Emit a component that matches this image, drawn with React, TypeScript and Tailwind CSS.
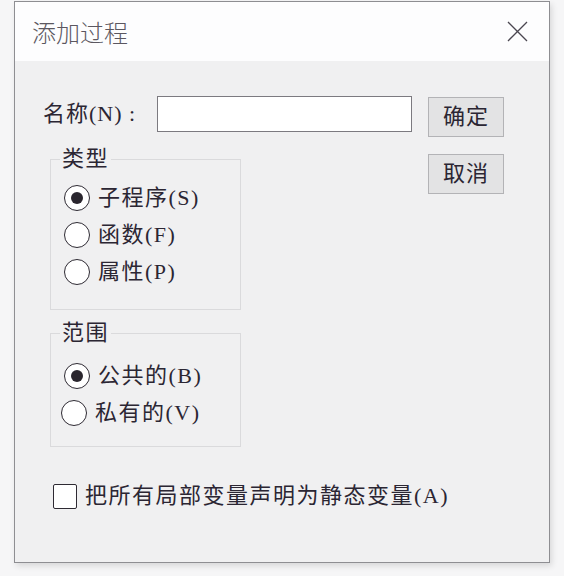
import React from "react";

const FONT = { fontFamily: '"Liberation Serif", "Noto Sans CJK SC", serif' };

function Radio({ checked, label, shift }: { checked?: boolean; label: string; shift?: boolean }) {
  return (
    <div className={"flex h-[37px] items-center gap-[8px] " + (shift ? "-ml-[3px]" : "")}>
      <div className="flex h-[26px] w-[26px] items-center justify-center rounded-full border-[1.5px] border-[#2e2a33] bg-white">
        {checked && <div className="h-[12px] w-[12px] rounded-full bg-[#2a262e]" />}
      </div>
      <span className="text-[22px] leading-[28px] tracking-[1.5px] text-[#2b2633]">{label}</span>
    </div>
  );
}

export default function App() {
  return (
    <div className="h-[576px] w-[564px] overflow-hidden bg-[#f6f6f7] pt-[1px]" style={FONT}>
      <div className="ml-[14px] flex h-[562px] w-[536px] flex-col border border-[#8e8e92] bg-[#f0f0f1] shadow-[2px_3px_6px_rgba(0,0,0,0.12)]">
        <div className="flex h-[59px] items-center justify-between bg-[#fdfdfe] pl-[17px] pr-[21px]">
          <span
            className="text-[24px] font-light leading-none text-[#5b5760]"
            style={{ fontFamily: '"Noto Sans CJK SC", sans-serif' }}
          >
            添加过程
          </span>
          <svg width="21" height="21" viewBox="0 0 21 21" className="text-[#4a4650]">
            <path d="M1 1L20 20M20 1L1 20" stroke="currentColor" strokeWidth="1.3" fill="none" />
          </svg>
        </div>
        <div className="flex flex-1 pl-[28px] pt-[35px]">
          <div className="flex w-[369px] shrink-0 flex-col">
            <div className="flex h-[36px] items-center">
              <span className="w-[114px] text-[22px] leading-[28px] tracking-[1px] text-[#2b2633]">名称(N) :</span>
              <div className="h-[36px] w-[255px] border border-[#7c7a80] bg-white" />
            </div>
            <fieldset className="ml-[7px] mt-[13px] w-[191px] border border-[#dadadc] pb-[19px] pl-[13px] pt-[6px]">
              <legend className="-ml-[4px] px-[2px] text-[22px] leading-[28px] tracking-[1.5px] text-[#2b2633]">类型</legend>
              <Radio checked label="子程序(S)" />
              <Radio label="函数(F)" />
              <Radio label="属性(P)" />
            </fieldset>
            <fieldset className="ml-[7px] mt-[9px] w-[191px] border border-[#dadadc] pb-[15px] pl-[13px] pt-[10px]">
              <legend className="-ml-[4px] px-[2px] text-[22px] leading-[28px] tracking-[1.5px] text-[#2b2633]">范围</legend>
              <Radio checked label="公共的(B)" />
              <Radio shift label="私有的(V)" />
            </fieldset>
            <div className="ml-[10px] mt-[34px] flex h-[30px] items-center gap-[8px]">
              <div className="h-[25px] w-[24px] shrink-0 rounded-[2px] border-[1.5px] border-[#2e2a33] bg-white" />
              <span className="whitespace-nowrap text-[22px] leading-[28px] tracking-[1.5px] text-[#2b2633]">把所有局部变量声明为静态变量(A)</span>
            </div>
          </div>
          <div className="ml-[16px] mt-[1px] flex flex-col gap-[17px]">
            <button className="flex h-[40px] w-[76px] items-center justify-center border border-[#b3b3b6] bg-[#e3e3e4] text-[22px] leading-none tracking-[1px] text-[#2b2633]">
              确定
            </button>
            <button className="flex h-[40px] w-[76px] items-center justify-center border border-[#b3b3b6] bg-[#e3e3e4] text-[22px] leading-none tracking-[1px] text-[#2b2633]">
              取消
            </button>
          </div>
        </div>
      </div>
    </div>
  );
}
